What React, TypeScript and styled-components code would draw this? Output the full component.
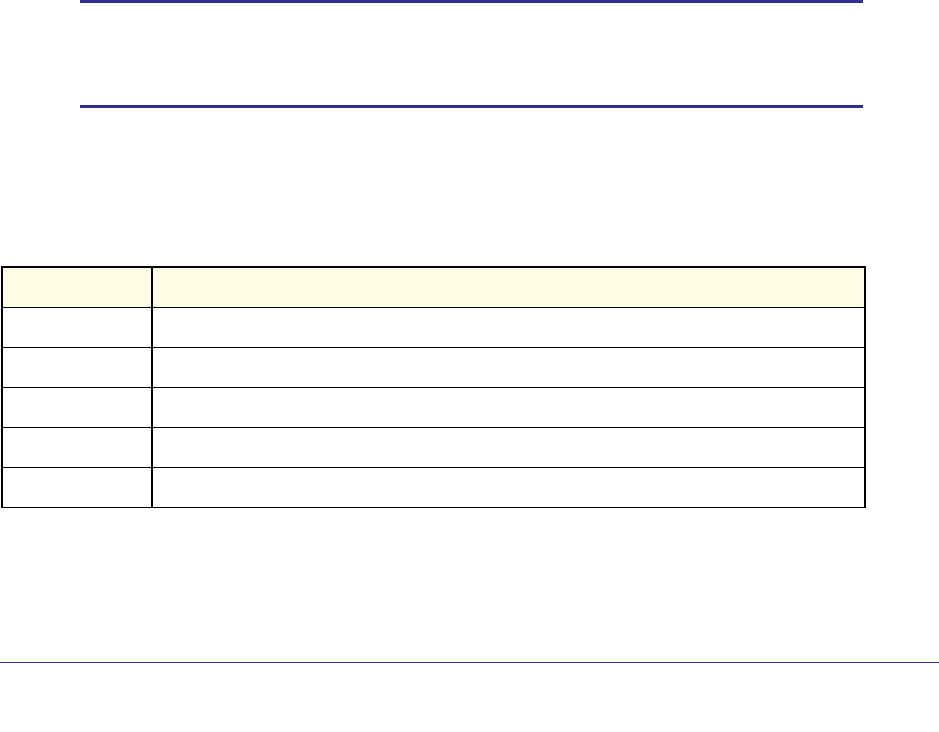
import styled, { createGlobalStyle } from "styled-components";

const GlobalStyle = createGlobalStyle`
  html, body {
    margin: 0;
    padding: 0;
    background: #ffffff;
    font-family: "Liberation Sans", Arial, sans-serif;
  }
`;

const Page = styled.div`
  width: 939px;
  height: 732px;
  display: flex;
  flex-direction: column;
  overflow: hidden;
`;

const NoteBox = styled.div`
  margin-left: 80px;
  width: 783px;
  height: 102px;
  flex-shrink: 0;
  border-top: 3px solid #2e3192;
  border-bottom: 3px solid #2e3192;
`;

const TableArea = styled.div`
  margin: 158px 0 0 1px;
  height: 241px;
  flex-shrink: 0;
`;

const Table = styled.table`
  width: 865px;
  border-collapse: collapse;
  table-layout: fixed;
`;

const Cell = styled.td<{ $head?: boolean }>`
  height: 39px;
  padding: 0;
  border-top: ${(p) => (p.$head ? 2 : 1)}px solid #000;
  border-bottom: 1px solid #000;
  border-left: 2px solid #000;
  border-right: 2px solid #000;
  background: ${(p) => (p.$head ? "#fffce6" : "#ffffff")};

  &:first-child {
    width: 148px;
  }
`;

const FooterRule = styled.div`
  margin-top: 155px;
  width: 939px;
  height: 0;
  flex-shrink: 0;
  border-top: 1.5px solid #2e3192;
`;

const rows = [0, 1, 2, 3, 4];

export default function App() {
  return (
    <>
      <GlobalStyle />
      <Page>
        <NoteBox />
        <TableArea>
          <Table>
            <thead>
              <tr>
                <Cell as="th" $head />
                <Cell as="th" $head />
              </tr>
            </thead>
            <tbody>
              {rows.map((r) => (
                <tr key={r}>
                  <Cell />
                  <Cell />
                </tr>
              ))}
            </tbody>
          </Table>
        </TableArea>
        <FooterRule />
      </Page>
    </>
  );
}
